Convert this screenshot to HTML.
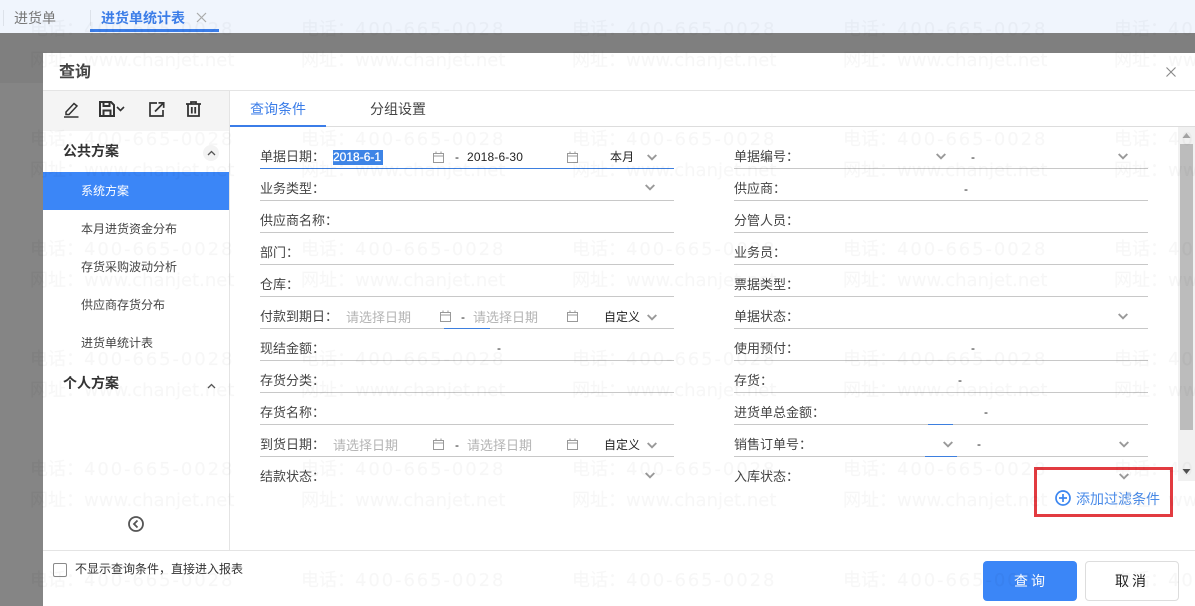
<!DOCTYPE html>
<html lang="zh"><head><meta charset="utf-8"><title>查询</title>
<style>
html{margin:0;padding:0;width:1195px;height:606px;overflow:hidden}
body{margin:0;padding:0;width:1195px;height:606px;position:relative;overflow:hidden;background:#858585;font-family:"Liberation Sans","Noto Sans CJK SC",sans-serif;color:#333}
.a,.t,.l,.w{position:absolute}
.t{white-space:nowrap;font-size:13px;line-height:18px;color:#444}
.l{height:1px;background:#c8c8c8}
.b{background:#3d7fdf}
.g{color:#b4b4b4}
.k{color:#222;font-size:12px;letter-spacing:.15px}
.w{white-space:nowrap;font:18px/31px "DejaVu Sans",sans-serif;letter-spacing:1.9px;color:rgba(0,0,0,.03);-webkit-text-stroke:.5px rgba(0,0,0,.012);z-index:9;width:240px;pointer-events:none}
.w span{font-family:"Noto Sans CJK SC",sans-serif;letter-spacing:0;line-height:0}
.w i{font-style:normal;letter-spacing:0}
svg{position:absolute;overflow:visible;fill:none}
</style></head><body>
<div class="a" style="left:0;top:0;width:1195px;height:33px;background:#f0f5fd"></div>
<div class="a" style="left:3px;top:10px;width:1px;height:16px;background:#dde2ea"></div>
<div class="a" style="left:90px;top:10px;width:1px;height:16px;background:#dde2ea"></div>
<div class="t" style="left:14px;top:9px;font-size:14px;color:#777">进货单</div>
<div class="t" style="left:101px;top:9px;font-size:14px;font-weight:700;color:#3b7de8">进货单统计表</div>
<svg style="left:196px;top:12px" width="11" height="11"><path d="M1 1l9 9M10 1l-9 9" stroke="#aaa" stroke-width="1.2"/></svg>
<div class="a" style="left:90px;top:29px;width:129px;height:3px;background:#3b7de8"></div>
<div class="a" style="left:0;top:33px;width:1195px;height:50px;background:#7f7f7f"></div>

<div class="a" style="left:43px;top:53px;width:1152px;height:553px;background:#fff"></div>
<div class="t" style="left:59px;top:64px;font-size:16px;line-height:18px;font-weight:700;color:#444">查询</div>
<svg style="left:1166px;top:67px" width="10" height="10"><path d="M.5.5l9 9M9.5.5l-9 9" stroke="#888" stroke-width="1.1"/></svg>
<div class="l" style="left:43px;top:90px;width:1152px;background:#e4e4e4"></div>
<div class="a" style="left:43px;top:91px;width:186px;height:40px;background:#f4f4f4"></div>
<div class="a" style="left:229px;top:91px;width:1px;height:459px;background:#e4e4e4"></div>
<div class="l" style="left:43px;top:550px;width:1152px;background:#e4e4e4"></div>

<svg style="left:64px;top:101px" width="15" height="17" stroke="#333" stroke-width="1.5"><path d="M2 11L10 2.5l3 2.5-8 8.5H2zM0 16h14.500"/></svg>
<svg style="left:99px;top:101px" width="28" height="16" stroke="#333" stroke-width="2"><path d="M1 1h11l3 3v11H1zM4.500 1v4h6V1M4.500 15V9.500h7V15"/><path d="M18 6l3.500 3.500L25 6" stroke-width="1.600"/></svg>
<svg style="left:149px;top:102px" width="16" height="15" stroke="#333" stroke-width="1.700"><path d="M8 1H1v13h13V8M6 9.500L14.500 1M9.500 .9h5.200v5"/></svg>
<svg style="left:186px;top:101px" width="15" height="16" stroke="#333" stroke-width="1.800"><path d="M0 3h15M5 3V1h5v2M2 3v12h11V3M5.800 6v6.500M9.200 6v6.500"/></svg>

<div class="t" style="left:63px;top:142px;font-size:14px;font-weight:700;color:#333">公共方案</div>
<div class="a" style="left:203px;top:145px;width:16px;height:16px;border-radius:8px;background:#f3f3f3"></div>
<svg style="left:207px;top:150px" width="9" height="6" stroke="#555" stroke-width="1.300"><path d="M1 5l3.500-3.500L8 5"/></svg>
<div class="a" style="left:43px;top:172px;width:186px;height:38px;background:#3b86f7"></div>
<div class="t" style="left:81px;top:182px;font-size:12px;color:#fff">系统方案</div>
<div class="t" style="left:81px;top:220px;font-size:12px">本月进货资金分布</div>
<div class="t" style="left:81px;top:258px;font-size:12px">存货采购波动分析</div>
<div class="t" style="left:81px;top:296px;font-size:12px">供应商存货分布</div>
<div class="t" style="left:81px;top:334px;font-size:12px">进货单统计表</div>
<div class="t" style="left:63px;top:374px;font-size:14px;font-weight:700;color:#333">个人方案</div>
<svg style="left:207px;top:383px" width="9" height="6" stroke="#555" stroke-width="1.300"><path d="M1 5l3.500-3.500L8 5"/></svg>
<svg style="left:128px;top:516px" width="16" height="16" stroke="#555"><circle cx="8" cy="8" r="7" stroke-width="1.800"/><path d="M9.500 4.500L6 8l3.500 3.500" stroke-width="1.800"/></svg>

<div class="t" style="left:250px;top:100px;font-size:14px;color:#3b7de8">查询条件</div>
<div class="t" style="left:370px;top:100px;font-size:14px">分组设置</div>
<div class="l" style="left:230px;top:126px;width:965px;background:#ddd"></div>
<div class="a" style="left:230px;top:125px;width:96px;height:2px;background:#3b7de8"></div>

<!-- left labels -->
<div class="t" style="left:260px;top:148px">单据日期：</div>
<div class="t" style="left:260px;top:180px">业务类型：</div>
<div class="t" style="left:260px;top:212px">供应商名称：</div>
<div class="t" style="left:260px;top:244px">部门：</div>
<div class="t" style="left:260px;top:276px">仓库：</div>
<div class="t" style="left:260px;top:308px">付款到期日：</div>
<div class="t" style="left:260px;top:340px">现结金额：</div>
<div class="t" style="left:260px;top:372px">存货分类：</div>
<div class="t" style="left:260px;top:404px">存货名称：</div>
<div class="t" style="left:260px;top:436px">到货日期：</div>
<div class="t" style="left:260px;top:468px">结款状态：</div>
<!-- right labels -->
<div class="t" style="left:734px;top:148px">单据编号：</div>
<div class="t" style="left:734px;top:180px">供应商：</div>
<div class="t" style="left:734px;top:212px">分管人员：</div>
<div class="t" style="left:734px;top:244px">业务员：</div>
<div class="t" style="left:734px;top:276px">票据类型：</div>
<div class="t" style="left:734px;top:308px">单据状态：</div>
<div class="t" style="left:734px;top:340px">使用预付：</div>
<div class="t" style="left:734px;top:372px">存货：</div>
<div class="t" style="left:734px;top:404px">进货单总金额：</div>
<div class="t" style="left:734px;top:436px">销售订单号：</div>
<div class="t" style="left:734px;top:468px">入库状态：</div>

<!-- lines -->
<div class="l b" style="left:260px;top:168px;width:414px"></div>
<div class="l" style="left:260px;top:200px;width:414px"></div>
<div class="l" style="left:260px;top:232px;width:414px"></div>
<div class="l" style="left:260px;top:264px;width:414px"></div>
<div class="l" style="left:260px;top:296px;width:414px"></div>
<div class="l" style="left:260px;top:328px;width:414px"></div>
<div class="l b" style="left:444px;top:328px;width:46px"></div>
<div class="l" style="left:260px;top:360px;width:414px"></div>
<div class="l" style="left:260px;top:392px;width:414px"></div>
<div class="l" style="left:260px;top:424px;width:414px"></div>
<div class="l" style="left:260px;top:456px;width:414px"></div>
<div class="l" style="left:734px;top:168px;width:414px"></div>
<div class="l" style="left:734px;top:200px;width:414px"></div>
<div class="l" style="left:734px;top:232px;width:414px"></div>
<div class="l" style="left:734px;top:264px;width:414px"></div>
<div class="l" style="left:734px;top:296px;width:414px"></div>
<div class="l" style="left:734px;top:328px;width:414px"></div>
<div class="l" style="left:734px;top:360px;width:414px"></div>
<div class="l" style="left:734px;top:392px;width:414px"></div>
<div class="l" style="left:734px;top:424px;width:414px"></div>
<div class="l b" style="left:928px;top:424px;width:25px"></div>
<div class="l" style="left:734px;top:456px;width:414px"></div>
<div class="l b" style="left:925px;top:456px;width:32px"></div>

<!-- values -->
<div class="a" style="left:333px;top:150px;width:50px;height:15px;background:#3d84e6"></div>
<div class="t k" style="left:333px;top:148px;color:#fff;-webkit-text-stroke:.25px #fff;letter-spacing:0">2018-6-1</div>
<div class="t k" style="left:455px;top:148px">-</div>
<div class="t k" style="left:467px;top:148px">2018-6-30</div>
<div class="t k" style="left:610px;top:148px">本月</div>
<div class="t k" style="left:604px;top:308px;letter-spacing:0">自定义</div>
<div class="t k" style="left:604px;top:436px;letter-spacing:0">自定义</div>
<div class="t g" style="left:346px;top:309px;font-size:13px">请选择日期</div>
<div class="t k" style="left:461px;top:308px">-</div>
<div class="t g" style="left:473px;top:309px;font-size:13px">请选择日期</div>
<div class="t g" style="left:333px;top:437px;font-size:13px">请选择日期</div>
<div class="t k" style="left:455px;top:436px">-</div>
<div class="t g" style="left:467px;top:437px;font-size:13px">请选择日期</div>
<div class="t k" style="left:497px;top:339px">-</div>
<div class="t k" style="left:971px;top:148px">-</div>
<div class="t k" style="left:964px;top:180px">-</div>
<div class="t k" style="left:971px;top:339px">-</div>
<div class="t k" style="left:958px;top:371px">-</div>
<div class="t k" style="left:984px;top:403px">-</div>
<div class="t k" style="left:977px;top:435px">-</div>

<!-- calendars -->
<svg style="left:433px;top:151px" width="11" height="12" stroke="#999"><path d="M.5 2.500h10v9H.5zM.5 5h10M3 .5v2M8 .5v2"/></svg>
<svg style="left:567px;top:151px" width="11" height="12" stroke="#999"><path d="M.5 2.500h10v9H.5zM.5 5h10M3 .5v2M8 .5v2"/></svg>
<svg style="left:440px;top:310px" width="11" height="12" stroke="#999"><path d="M.5 2.500h10v9H.5zM.5 5h10M3 .5v2M8 .5v2"/></svg>
<svg style="left:567px;top:310px" width="11" height="12" stroke="#999"><path d="M.5 2.500h10v9H.5zM.5 5h10M3 .5v2M8 .5v2"/></svg>
<svg style="left:433px;top:438px" width="11" height="12" stroke="#999"><path d="M.5 2.500h10v9H.5zM.5 5h10M3 .5v2M8 .5v2"/></svg>
<svg style="left:567px;top:438px" width="11" height="12" stroke="#999"><path d="M.5 2.500h10v9H.5zM.5 5h10M3 .5v2M8 .5v2"/></svg>

<!-- chevrons -->
<svg style="left:647px;top:154px" width="10" height="7" stroke="#999" stroke-width="1.900"><path d="M.7 1L5 5.300 9.300 1"/></svg>
<svg style="left:645px;top:184px" width="10" height="7" stroke="#999" stroke-width="1.900"><path d="M.7 1L5 5.300 9.300 1"/></svg>
<svg style="left:647px;top:314px" width="10" height="7" stroke="#999" stroke-width="1.900"><path d="M.7 1L5 5.300 9.300 1"/></svg>
<svg style="left:647px;top:442px" width="10" height="7" stroke="#999" stroke-width="1.900"><path d="M.7 1L5 5.300 9.300 1"/></svg>
<svg style="left:645px;top:472px" width="10" height="7" stroke="#999" stroke-width="1.900"><path d="M.7 1L5 5.300 9.300 1"/></svg>
<svg style="left:936px;top:153px" width="10" height="7" stroke="#999" stroke-width="1.900"><path d="M.7 1L5 5.300 9.300 1"/></svg>
<svg style="left:1118px;top:153px" width="10" height="7" stroke="#999" stroke-width="1.900"><path d="M.7 1L5 5.300 9.300 1"/></svg>
<svg style="left:1118px;top:313px" width="10" height="7" stroke="#999" stroke-width="1.900"><path d="M.7 1L5 5.300 9.300 1"/></svg>
<svg style="left:943px;top:441px" width="10" height="7" stroke="#999" stroke-width="1.900"><path d="M.7 1L5 5.300 9.300 1"/></svg>
<svg style="left:1119px;top:441px" width="10" height="7" stroke="#999" stroke-width="1.900"><path d="M.7 1L5 5.300 9.300 1"/></svg>
<svg style="left:1119px;top:473px" width="10" height="7" stroke="#999" stroke-width="1.900"><path d="M.7 1L5 5.300 9.300 1"/></svg>

<!-- scrollbar -->
<div class="a" style="left:1178px;top:127px;width:17px;height:354px;background:#f1f1f1"></div>
<div class="a" style="left:1180px;top:144px;width:13px;height:286px;background:#bcbcbc"></div>
<svg style="left:1182px;top:133px" width="9" height="5"><path d="M4.500 0L8.500 5H.5z" fill="#a3a3a3"/></svg>
<svg style="left:1182px;top:469px" width="9" height="5"><path d="M.5 0h8l-4 5z" fill="#505050"/></svg>

<!-- add filter -->
<div class="a" style="left:1034px;top:467px;width:133px;height:44px;border:3px solid #e23b40"></div>
<svg style="left:1055px;top:490px" width="16" height="16" stroke="#3b86f0" stroke-width="1.700"><circle cx="8" cy="8" r="7"/><path d="M4 8h8M8 4v8"/></svg>
<div class="t" style="left:1076px;top:490px;font-size:14px;color:#4a8be8">添加过滤条件</div>

<!-- footer -->
<div class="a" style="left:53px;top:563px;width:12px;height:12px;border:1px solid #8a8a8a;border-radius:2px"></div>
<div class="t" style="left:75px;top:560px;font-size:12px;color:#333">不显示查询条件，直接进入报表</div>
<div class="a" style="left:983px;top:561px;width:94px;height:40px;border-radius:4px;background:#3b86f7"></div>
<div class="t" style="left:984px;top:572px;width:94px;text-align:center;font-size:14px;letter-spacing:3px;color:#fff">查询</div>
<div class="a" style="left:1085px;top:561px;width:92px;height:38px;border:1px solid #ddd;border-radius:4px;background:#fff"></div>
<div class="t" style="left:1085px;top:572px;width:94px;text-align:center;font-size:14px;letter-spacing:3px;color:#222">取消</div>

<!-- watermark -->
<div class="w" style="left:30px;top:14px"><span>电话：</span>400-665-0028<br><span>网址：</span><i>www.chanjet.net</i></div>
<div class="w" style="left:301px;top:14px"><span>电话：</span>400-665-0028<br><span>网址：</span><i>www.chanjet.net</i></div>
<div class="w" style="left:572px;top:14px"><span>电话：</span>400-665-0028<br><span>网址：</span><i>www.chanjet.net</i></div>
<div class="w" style="left:843px;top:14px"><span>电话：</span>400-665-0028<br><span>网址：</span><i>www.chanjet.net</i></div>
<div class="w" style="left:1114px;top:14px"><span>电话：</span>400-665-0028<br><span>网址：</span><i>www.chanjet.net</i></div>
<div class="w" style="left:30px;top:124px"><span>电话：</span>400-665-0028<br><span>网址：</span><i>www.chanjet.net</i></div>
<div class="w" style="left:301px;top:124px"><span>电话：</span>400-665-0028<br><span>网址：</span><i>www.chanjet.net</i></div>
<div class="w" style="left:572px;top:124px"><span>电话：</span>400-665-0028<br><span>网址：</span><i>www.chanjet.net</i></div>
<div class="w" style="left:843px;top:124px"><span>电话：</span>400-665-0028<br><span>网址：</span><i>www.chanjet.net</i></div>
<div class="w" style="left:1114px;top:124px"><span>电话：</span>400-665-0028<br><span>网址：</span><i>www.chanjet.net</i></div>
<div class="w" style="left:30px;top:234px"><span>电话：</span>400-665-0028<br><span>网址：</span><i>www.chanjet.net</i></div>
<div class="w" style="left:301px;top:234px"><span>电话：</span>400-665-0028<br><span>网址：</span><i>www.chanjet.net</i></div>
<div class="w" style="left:572px;top:234px"><span>电话：</span>400-665-0028<br><span>网址：</span><i>www.chanjet.net</i></div>
<div class="w" style="left:843px;top:234px"><span>电话：</span>400-665-0028<br><span>网址：</span><i>www.chanjet.net</i></div>
<div class="w" style="left:1114px;top:234px"><span>电话：</span>400-665-0028<br><span>网址：</span><i>www.chanjet.net</i></div>
<div class="w" style="left:30px;top:344px"><span>电话：</span>400-665-0028<br><span>网址：</span><i>www.chanjet.net</i></div>
<div class="w" style="left:301px;top:344px"><span>电话：</span>400-665-0028<br><span>网址：</span><i>www.chanjet.net</i></div>
<div class="w" style="left:572px;top:344px"><span>电话：</span>400-665-0028<br><span>网址：</span><i>www.chanjet.net</i></div>
<div class="w" style="left:843px;top:344px"><span>电话：</span>400-665-0028<br><span>网址：</span><i>www.chanjet.net</i></div>
<div class="w" style="left:1114px;top:344px"><span>电话：</span>400-665-0028<br><span>网址：</span><i>www.chanjet.net</i></div>
<div class="w" style="left:30px;top:454px"><span>电话：</span>400-665-0028<br><span>网址：</span><i>www.chanjet.net</i></div>
<div class="w" style="left:301px;top:454px"><span>电话：</span>400-665-0028<br><span>网址：</span><i>www.chanjet.net</i></div>
<div class="w" style="left:572px;top:454px"><span>电话：</span>400-665-0028<br><span>网址：</span><i>www.chanjet.net</i></div>
<div class="w" style="left:843px;top:454px"><span>电话：</span>400-665-0028<br><span>网址：</span><i>www.chanjet.net</i></div>
<div class="w" style="left:1114px;top:454px"><span>电话：</span>400-665-0028<br><span>网址：</span><i>www.chanjet.net</i></div>
<div class="w" style="left:30px;top:565px"><span>电话：</span>400-665-0028</div>
<div class="w" style="left:301px;top:565px"><span>电话：</span>400-665-0028</div>
<div class="w" style="left:572px;top:565px"><span>电话：</span>400-665-0028</div>
<div class="w" style="left:843px;top:565px"><span>电话：</span>400-665-0028</div>
<div class="w" style="left:1114px;top:565px"><span>电话：</span>400-665-0028</div>
</body></html>
